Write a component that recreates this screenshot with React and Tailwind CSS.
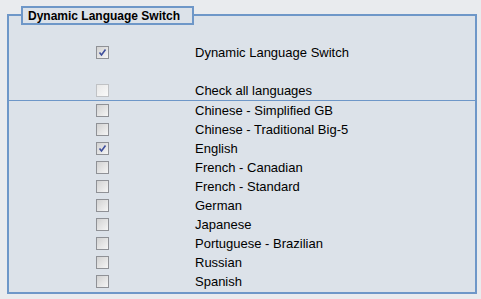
import React from 'react';

const languages = [
  { name: 'Chinese - Simplified GB', checked: false },
  { name: 'Chinese - Traditional Big-5', checked: false },
  { name: 'English', checked: true },
  { name: 'French - Canadian', checked: false },
  { name: 'French - Standard', checked: false },
  { name: 'German', checked: false },
  { name: 'Japanese', checked: false },
  { name: 'Portuguese - Brazilian', checked: false },
  { name: 'Russian', checked: false },
  { name: 'Spanish', checked: false },
];

const Box = ({ checked, faded }) => (
  <span
    className={`w-[13px] h-[13px] border flex items-center justify-center bg-gradient-to-br ${
      faded ? 'border-[#c0c2c5] from-[#e8e8e8] to-[#fafafa]' : 'border-[#8f9196] from-[#d2d2d2] to-[#f5f5f5]'
    }`}
  >
    {checked && (
      <svg width="9" height="9" viewBox="0 0 9 9">
        <path d="M1.5 4.5 L3.5 7 L7.5 1.5" stroke="#3f4f9c" strokeWidth="1.6" fill="none" />
      </svg>
    )}
  </span>
);

const Row = ({ label, checked, faded }) => (
  <div className="flex items-center h-[19px]">
    <div className="w-[186px] pl-[87px] flex items-center">
      <Box checked={checked} faded={faded} />
    </div>
    <span className="text-[13px] text-black leading-none">{label}</span>
  </div>
);

export default function App() {
  return (
    <div className="w-[481px] h-[299px] bg-[#e9ebee] pt-[14px] pl-[7px] font-['Liberation_Sans',Arial,sans-serif]">
      <div className="relative w-[470px] h-[280px] border-2 border-[#6e97c8] bg-[#dce2e9]">
        <div className="absolute left-[12px] top-[-10px] w-[173px] h-[19px] border-2 border-[#6e97c8] bg-[#dce2e9] flex items-center pl-[5px]">
          <span className="text-[12px] font-bold text-black leading-none">Dynamic Language Switch</span>
        </div>

        <div className="pt-[27px]">
          <Row label="Dynamic Language Switch" checked />
          <div className="h-[19px]" />
          <Row label="Check all languages" faded />
        </div>
        <div className="h-px bg-[#6e97c8]" />
        <div>
          {languages.map((l) => (
            <Row key={l.name} label={l.name} checked={l.checked} />
          ))}
        </div>
      </div>
    </div>
  );
}
